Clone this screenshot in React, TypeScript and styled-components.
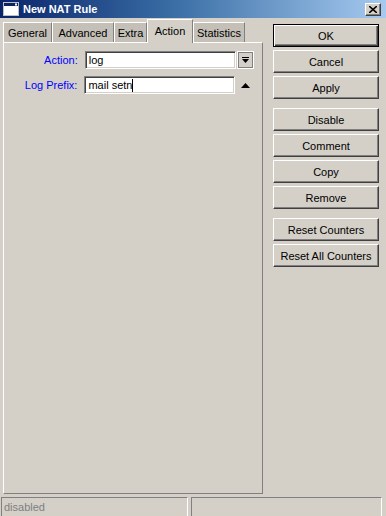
import React from "react";
import styled, { createGlobalStyle } from "styled-components";

const Global = createGlobalStyle`
  html, body { margin: 0; padding: 0; background: #d4d0c8; }
  body { font-family: "Liberation Sans", Arial, sans-serif; font-size: 11px; color: #000; }
  #root { width: 386px; height: 516px; overflow: hidden; }
`;

const Window = styled.div`
  width: 386px;
  height: 516px;
  background: #d4d0c8;
  display: flex;
  flex-direction: column;
  box-sizing: border-box;
`;

const TitleBar = styled.div`
  height: 18px;
  flex: none;
  display: flex;
  align-items: center;
  background: linear-gradient(to right, #0a246a 0%, #3a6ea5 45%, #a6caf0 100%);
  padding: 0 5px 0 3px;
`;

const TitleText = styled.div`
  color: #fff;
  font-weight: bold;
  font-size: 11px;
  margin-left: 4px;
  flex: 1;
`;

const CloseBtn = styled.div`
  width: 16px;
  height: 13px;
  box-sizing: border-box;
  background: #d4d0c8;
  border-top: 1px solid #fff;
  border-left: 1px solid #fff;
  border-right: 1px solid #404040;
  border-bottom: 1px solid #404040;
  box-shadow: inset -1px -1px 0 #808080;
  display: flex;
  align-items: center;
  justify-content: center;
`;

const Body = styled.div`
  flex: 1;
  display: flex;
  min-height: 0;
`;

const LeftCol = styled.div`
  width: 260px;
  margin-left: 3px;
  display: flex;
  flex-direction: column;
`;

const TabRow = styled.div`
  height: 24px;
  display: flex;
  align-items: flex-end;
  position: relative;
  z-index: 1;
`;

const Tab = styled.div<{ $active?: boolean; $w: number }>`
  width: ${(p) => p.$w}px;
  box-sizing: border-box;
  height: ${(p) => (p.$active ? 24 : 20)}px;
  margin-bottom: ${(p) => (p.$active ? -1 : 0)}px;
  background: ${(p) => (p.$active ? "#d4d0c8" : "#c4c0b8")};
  border-top: 1px solid #fff;
  border-left: 1px solid #fff;
  border-right: 1px solid #808080;
  display: flex;
  align-items: center;
  justify-content: center;
  padding-bottom: ${(p) => (p.$active ? 2 : 0)}px;
  font-size: 11px;
  color: #000;
`;

const Panel = styled.div`
  height: 452px;
  box-sizing: border-box;
  border-top: 1px solid #fff;
  border-left: 1px solid #fff;
  border-right: 1px solid #808080;
  border-bottom: 1px solid #808080;
  padding: 8px 8px 0 0;
  display: flex;
  flex-direction: column;
  gap: 7px;
`;

const FormRow = styled.div`
  display: flex;
  align-items: center;
  height: 18px;
`;

const Label = styled.div`
  width: 75px;
  text-align: right;
  color: #0000ff;
  margin-right: 7px;
  font-size: 11px;
`;

const Input = styled.div`
  width: 154px;
  height: 18px;
  box-sizing: border-box;
  background: #fff;
  border-top: 1px solid #808080;
  border-left: 1px solid #808080;
  border-right: 1px solid #fff;
  border-bottom: 1px solid #fff;
  box-shadow: inset 1px 1px 0 #404040, inset -1px -1px 0 #d4d0c8;
  padding: 0 3px;
  display: flex;
  align-items: center;
  font-size: 11px;
`;

const Caret = styled.span`
  display: inline-block;
  width: 1px;
  height: 13px;
  background: #000;
`;

const DropBtn = styled.div`
  width: 17px;
  height: 18px;
  margin-left: 1px;
  box-sizing: border-box;
  border: 1px solid #fff;
  box-shadow: inset 1px 1px 0 #808080, inset -1px -1px 0 #808080;
  display: flex;
  align-items: center;
  justify-content: center;
`;

const UpArrow = styled.div`
  width: 17px;
  margin-left: 2px;
  display: flex;
  align-items: center;
  justify-content: center;
`;

const RightCol = styled.div`
  width: 106px;
  margin-left: 10px;
  padding-top: 6px;
  display: flex;
  flex-direction: column;
`;

const Button = styled.div<{ $default?: boolean; $gapTop?: number }>`
  height: 23px;
  box-sizing: border-box;
  margin-top: ${(p) => p.$gapTop ?? 3}px;
  background: #d4d0c8;
  display: flex;
  align-items: center;
  justify-content: center;
  font-size: 11px;
  color: #000;
  border: 1px solid ${(p) => (p.$default ? "#000" : "transparent")};
  box-shadow: inset 1px 1px 0 #fff, inset -1px -1px 0 #404040, inset -2px -2px 0 #808080;
  ${(p) =>
    !p.$default &&
    `border-top-color: #fff; border-left-color: #fff; border-right-color: #404040; border-bottom-color: #404040; box-shadow: inset -1px -1px 0 #808080, inset 1px 1px 0 #d4d0c8;`}
`;

const StatusBar = styled.div`
  height: 19px;
  flex: none;
  display: flex;
  gap: 3px;
  padding: 0 4px 0 1px;
`;

const StatusCell = styled.div<{ $w: number }>`
  width: ${(p) => p.$w}px;
  box-sizing: border-box;
  border-top: 1px solid #808080;
  border-left: 1px solid #808080;
  border-right: 1px solid #fff;
  padding: 3px 2px 0;
  color: #808080;
  font-size: 11px;
`;

function WinIcon() {
  return (
    <svg width="16" height="14" viewBox="0 0 16 14">
      <rect x="0.5" y="0.5" width="15" height="13" fill="#fff" stroke="#c0c0c0" />
      <rect x="1" y="1" width="14" height="3" fill="#0a246a" />
      <rect x="12" y="1.5" width="2" height="2" fill="#fff" />
    </svg>
  );
}

function CloseIcon() {
  return (
    <svg width="8" height="7" viewBox="0 0 8 7">
      <path d="M0 0 L8 7 M8 0 L0 7" stroke="#000" strokeWidth="1.6" />
    </svg>
  );
}

function DropIcon() {
  return (
    <svg width="7" height="7" viewBox="0 0 7 7">
      <rect x="0" y="0" width="7" height="1" fill="#000" />
      <path d="M0 2 H7 L3.5 6 Z" fill="#000" />
      <rect x="2" y="2" width="3" height="2" fill="#000" />
    </svg>
  );
}

function TriUp() {
  return (
    <svg width="9" height="5" viewBox="0 0 9 5">
      <path d="M0 5 L4.5 0 L9 5 Z" fill="#000" />
    </svg>
  );
}

const tabs = [
  { name: "General", w: 49 },
  { name: "Advanced", w: 62 },
  { name: "Extra", w: 33 },
  { name: "Action", w: 46, active: true },
  { name: "Statistics", w: 52 },
];

const buttons: { label: string; gap?: number; def?: boolean }[] = [
  { label: "OK", def: true, gap: 0 },
  { label: "Cancel" },
  { label: "Apply" },
  { label: "Disable", gap: 9 },
  { label: "Comment" },
  { label: "Copy" },
  { label: "Remove" },
  { label: "Reset Counters", gap: 9 },
  { label: "Reset All Counters" },
];

export default function App() {
  return (
    <>
      <Global />
      <Window>
        <TitleBar>
          <WinIcon />
          <TitleText>New NAT Rule</TitleText>
          <CloseBtn>
            <CloseIcon />
          </CloseBtn>
        </TitleBar>
        <Body>
          <LeftCol>
            <TabRow>
              {tabs.map((t) => (
                <Tab key={t.name} $w={t.w} $active={t.active}>
                  {t.name}
                </Tab>
              ))}
            </TabRow>
            <Panel>
              <FormRow>
                <Label>Action:</Label>
                <Input>log</Input>
                <DropBtn>
                  <DropIcon />
                </DropBtn>
              </FormRow>
              <FormRow>
                <Label>Log Prefix:</Label>
                <Input>
                  mail setn
                  <Caret />
                </Input>
                <UpArrow>
                  <TriUp />
                </UpArrow>
              </FormRow>
            </Panel>
          </LeftCol>
          <RightCol>
            {buttons.map((b) => (
              <Button key={b.label} $default={b.def} $gapTop={b.gap}>
                {b.label}
              </Button>
            ))}
          </RightCol>
        </Body>
        <StatusBar>
          <StatusCell $w={187}>disabled</StatusCell>
          <StatusCell $w={191} />
        </StatusBar>
      </Window>
    </>
  );
}
